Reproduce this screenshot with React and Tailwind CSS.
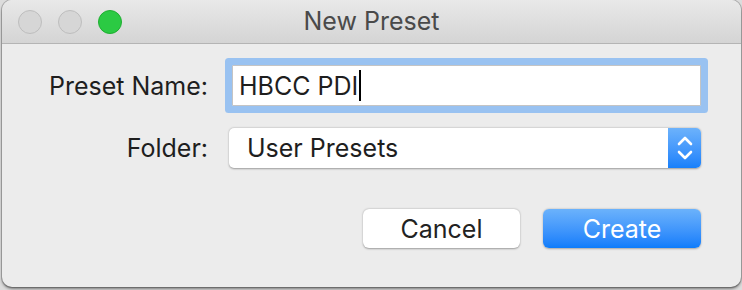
import React from "react";

const font = { fontFamily: "Inter, 'Noto Sans', 'Liberation Sans', sans-serif" };

export default function App() {
  return (
    <div className="w-[742px] h-[290px] bg-[#dcdcdc] flex pl-[2px] overflow-hidden" style={font}>
      <div className="w-[739px] h-[287px] rounded-[10px] bg-[#ececec] flex flex-col overflow-hidden shadow-[0_0_0_1px_rgba(0,0,0,0.18),0_2px_3px_rgba(0,0,0,0.45)]">
        <div className="relative h-[44px] shrink-0 bg-gradient-to-b from-[#e9e9e9] to-[#d4d4d4] border-b border-[#b4b4b4] flex items-center">
          <div className="flex items-center gap-[16px] pl-[16px]">
            <span className="w-[24px] h-[24px] rounded-full bg-[#d6d6d6] border border-[#bdbdbd]" />
            <span className="w-[24px] h-[24px] rounded-full bg-[#d6d6d6] border border-[#bdbdbd]" />
            <span className="w-[24px] h-[24px] rounded-full bg-[#2bca43] border border-[#1fae31]" />
          </div>
          <div className="absolute inset-0 flex items-center justify-center text-[25px] text-[#4a4a4a] pointer-events-none">
            New Preset
          </div>
        </div>
        <div className="flex flex-col text-[25px] text-[#1e1e1e]">
          <div className="mt-[21px] h-[41px] flex items-center">
            <div className="w-[206px] text-right pt-[2px]">Preset Name:</div>
            <div className="ml-[24px] w-[469px] h-[41px] bg-white border border-[#c4c4c4] flex items-center pl-[6px] shadow-[0_0_0_7px_#99c2f1] rounded-[1px]">
              <span className="pt-[2px]">HBCC PDI</span>
              <span className="w-[2px] h-[31px] bg-black ml-[1px]" />
            </div>
          </div>
          <div className="mt-[22px] h-[40px] flex items-center">
            <div className="w-[206px] text-right pt-[2px]">Folder:</div>
            <div className="ml-[21px] w-[472px] h-[40px] bg-white rounded-[5px] flex shadow-[0_0.5px_2px_rgba(0,0,0,0.35)] overflow-hidden">
              <div className="flex-1 flex items-center pl-[18px] pt-[2px]">User Presets</div>
              <div className="w-[33px] h-full bg-gradient-to-b from-[#6cb2fb] to-[#1680fb] flex items-center justify-center">
                <svg width="18" height="30" viewBox="0 0 18 30" fill="none" stroke="white" strokeWidth="2.6" strokeLinecap="round" strokeLinejoin="round">
                  <path d="M3 11 L9 5 L15 11" />
                  <path d="M3 19 L9 25 L15 19" />
                </svg>
              </div>
            </div>
          </div>
          <div className="mt-[41px] h-[39px] flex items-center">
            <button className="ml-[361px] w-[157px] h-[39px] bg-white rounded-[6px] text-[#222] pt-[2px] shadow-[0_0.5px_2px_rgba(0,0,0,0.35)]">
              Cancel
            </button>
            <button className="ml-[23px] w-[158px] h-[39px] rounded-[6px] text-white pt-[2px] bg-gradient-to-b from-[#6bb2fb] to-[#0b7cfb] shadow-[0_0.5px_2px_rgba(0,0,0,0.3)]">
              Create
            </button>
          </div>
        </div>
      </div>
    </div>
  );
}
